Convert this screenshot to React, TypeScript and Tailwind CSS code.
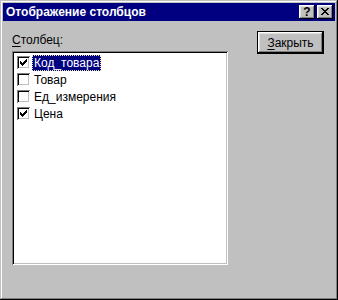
import React from 'react';

const items = [
  { name: 'Код_товара', checked: true },
  { name: 'Товар', checked: false },
  { name: 'Ед_измерения', checked: false },
  { name: 'Цена', checked: true },
];

const raised =
  'shadow-[inset_-1px_-1px_#000000,inset_1px_1px_#ffffff,inset_-2px_-2px_#808080,inset_2px_2px_#dfdfdf]';

const CheckMark: React.FC = () => (
  <svg width="7" height="7" viewBox="0 0 7 7" shapeRendering="crispEdges">
    <path d="M6 0h1v1h-1zM5 1h1v1h-1zM4 2h1v1h-1zM0 2h1v1h-1zM1 3h1v1h-1zM3 3h1v1h-1zM2 4h1v1h-1z" fill="#000" />
    <path d="M6 1h1v1h-1zM5 2h1v1h-1zM4 3h1v1h-1zM0 3h1v1h-1zM1 4h1v1h-1zM3 4h1v1h-1zM2 5h1v1h-1zM6 2h1v1h-1zM5 3h1v1h-1zM4 4h1v1h-1zM0 4h1v1h-1zM1 5h1v1h-1zM3 5h1v1h-1zM2 6h1v1h-1z" fill="#000" />
  </svg>
);

const App: React.FC = () => {
  return (
    <div
      className="w-[338px] h-[300px] bg-[#c0c0c0] p-[3px] flex flex-col shadow-[inset_-1px_-1px_#000000,inset_1px_1px_#c0c0c0,inset_-2px_-2px_#808080,inset_2px_2px_#ffffff]"
      style={{ fontFamily: '"Liberation Sans", Arial, sans-serif' }}
    >
      {/* title bar */}
      <div className="h-[18px] bg-[#000080] flex items-center pl-[3px] pr-[2px]">
        <span className="flex-1 text-white font-bold text-[12px] leading-none">Отображение столбцов</span>
        <div className="flex gap-[2px]">
          <div className={`w-[16px] h-[14px] bg-[#c0c0c0] flex items-center justify-center ${raised}`}>
            <span className="text-black font-bold text-[12px] leading-none -mt-px">?</span>
          </div>
          <div className={`w-[16px] h-[14px] bg-[#c0c0c0] flex items-center justify-center ${raised}`}>
            <svg width="8" height="7" viewBox="0 0 8 7" shapeRendering="crispEdges" className="-mt-px">
              <path d="M0 0h2v1h-2zM6 0h2v1h-2zM1 1h2v1h-2zM5 1h2v1h-2zM2 2h4v1h-4zM3 3h2v1h-2zM2 4h4v1h-4zM1 5h2v1h-2zM5 5h2v1h-2zM0 6h2v1h-2zM6 6h2v1h-2z" fill="#000" />
            </svg>
          </div>
        </div>
      </div>

      {/* body */}
      <div className="flex-1 flex pl-[9px] pr-[11px]">
        <div className="flex flex-col">
          <div className="mt-[13px] h-[17px] text-[12px] leading-[13px] text-black">
            <span className="underline underline-offset-2">С</span>толбец:
          </div>
          <div className="w-[216px] h-[214px] bg-white p-[2px] shadow-[inset_1px_1px_#808080,inset_-1px_-1px_#ffffff,inset_2px_2px_#000000,inset_-2px_-2px_#c0c0c0]">
            <div className="pt-px pl-[3px] flex flex-col">
              {items.map((it, i) => (
                <div key={it.name} className="h-[17px] flex items-center">
                  <div className="w-[13px] h-[13px] bg-white flex items-center justify-center shadow-[inset_1px_1px_#808080,inset_-1px_-1px_#ffffff,inset_2px_2px_#000000,inset_-2px_-2px_#c0c0c0]">
                    {it.checked && <CheckMark />}
                  </div>
                  <span
                    className={`ml-[2px] h-[16px] px-[1px] flex items-center text-[12px] leading-none ${
                      i === 0
                        ? 'bg-[#000080] text-white border border-dotted border-[#e8e8a0]'
                        : 'text-black border border-transparent'
                    }`}
                  >
                    {it.name}
                  </span>
                </div>
              ))}
            </div>
          </div>
        </div>
        <div className="flex-1" />
        <div className="mt-[10px]">
          <div className="w-[67px] h-[23px] border border-black bg-[#c0c0c0]">
            <div className={`w-full h-full flex items-center justify-center text-[12px] text-black ${raised}`}>
              <span className="underline underline-offset-2">З</span>акрыть
            </div>
          </div>
        </div>
      </div>
    </div>
  );
};

export default App;
